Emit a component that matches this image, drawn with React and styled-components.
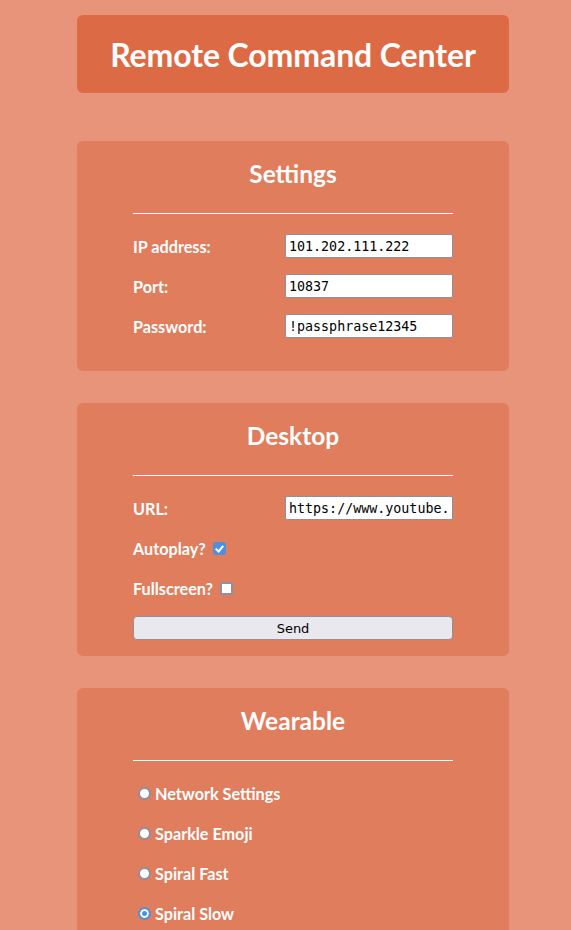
import React from "react";
import styled, { createGlobalStyle } from "styled-components";

const Global = createGlobalStyle`
  html, body { margin: 0; padding: 0; }
  body {
    background: #e8947a;
    font-family: "Lato", "Open Sans", sans-serif;
    color: #fff;
  }
`;

const Shell = styled.div`
  padding-left: 15px;
`;

const Page = styled.div`
  width: 432px;
  margin: 0 auto;
  padding: 15px 0 40px;
  display: flex;
  flex-direction: column;
  gap: 32px;
`;

const Header = styled.header`
  background: #dc6a45;
  border-radius: 6px;
  height: 78px;
  display: flex;
  align-items: center;
  justify-content: center;
  margin-bottom: 16px;
`;

const Title = styled.h1`
  margin: 0;
  font-size: 32px;
  font-weight: 700;
  letter-spacing: -0.1px;
`;

const Card = styled.section`
  background: #e07d5d;
  border-radius: 6px;
  padding: 18px 56px ${(p) => p.$bottom || 16}px;
`;

const CardTitle = styled.h2`
  margin: 0;
  text-align: center;
  font-size: 24.5px;
  font-weight: 700;
  line-height: 30px;
`;

const Rule = styled.hr`
  border: 0;
  border-top: 1px solid #fff;
  margin: 24px 0 12px;
`;

const Row = styled.div`
  display: flex;
  align-items: center;
  justify-content: space-between;
  height: 40px;
`;

const Label = styled.label`
  font-size: 16.2px;
  font-weight: 700;
  display: flex;
  align-items: center;
  gap: 7px;
`;

const TextInput = styled.input`
  width: 168px;
  height: 24px;
  box-sizing: border-box;
  border: 1px solid #8f8f9d;
  border-radius: 2px;
  background: #fff;
  font-family: "DejaVu Sans Mono", monospace;
  font-size: 13.33px;
  padding: 0 3px;
  color: #000;
  outline: none;
`;

const Check = styled.input`
  appearance: none;
  -webkit-appearance: none;
  position: relative;
  flex: none;
  width: 13px;
  height: 13px;
  margin: 0;
  box-sizing: border-box;
  border: 2px solid #8f8f9d;
  border-radius: 2px;
  background: #fff;

  &:checked {
    border-color: #4f8fe0;
    background: #4f8fe0;
    border-radius: 3px;
  }
  &:checked::after {
    content: "";
    position: absolute;
    left: 2.5px;
    top: 0px;
    width: 3px;
    height: 6px;
    border: solid #fff;
    border-width: 0 2px 2px 0;
    transform: rotate(40deg);
  }
`;

const Button = styled.button`
  width: 100%;
  height: 24px;
  margin-top: 8px;
  border: 1px solid #8f8f9d;
  border-radius: 4px;
  background: #e9e9ed;
  font-family: "DejaVu Sans", sans-serif;
  font-size: 13px;
  color: #000;
`;

const RadioRow = styled.label`
  display: flex;
  align-items: center;
  gap: 4px;
  height: 40px;
  padding-left: 5px;
  font-size: 16.2px;
  font-weight: 700;
`;

const Radio = styled.input`
  appearance: none;
  -webkit-appearance: none;
  flex: none;
  width: 13px;
  height: 13px;
  margin: 0;
  box-sizing: border-box;
  border: 2px solid #8f8f9d;
  border-radius: 50%;
  background: #fff;

  &:checked {
    border-color: #4f8fe0;
    background: #4f8fe0;
    box-shadow: inset 0 0 0 2px #fff;
  }
`;

export default function App() {
  return (
    <Shell>
      <Global />
      <Page>
        <Header>
          <Title>Remote Command Center</Title>
        </Header>

        <Card $bottom={25}>
          <CardTitle>Settings</CardTitle>
          <Rule />
          <Row>
            <Label>IP address:</Label>
            <TextInput defaultValue="101.202.111.222" />
          </Row>
          <Row>
            <Label>Port:</Label>
            <TextInput defaultValue="10837" />
          </Row>
          <Row>
            <Label>Password:</Label>
            <TextInput defaultValue="!passphrase12345" />
          </Row>
        </Card>

        <Card $bottom={16}>
          <CardTitle>Desktop</CardTitle>
          <Rule />
          <Row>
            <Label>URL:</Label>
            <TextInput defaultValue="https://www.youtube.com/watch" />
          </Row>
          <Row>
            <Label>
              Autoplay?
              <Check type="checkbox" defaultChecked />
            </Label>
          </Row>
          <Row>
            <Label>
              Fullscreen?
              <Check type="checkbox" />
            </Label>
          </Row>
          <Button>Send</Button>
        </Card>

        <Card $bottom={16}>
          <CardTitle>Wearable</CardTitle>
          <Rule />
          <RadioRow>
            <Radio type="radio" name="w" />
            Network Settings
          </RadioRow>
          <RadioRow>
            <Radio type="radio" name="w" />
            Sparkle Emoji
          </RadioRow>
          <RadioRow>
            <Radio type="radio" name="w" />
            Spiral Fast
          </RadioRow>
          <RadioRow>
            <Radio type="radio" name="w" defaultChecked />
            Spiral Slow
          </RadioRow>
        </Card>
      </Page>
    </Shell>
  );
}
